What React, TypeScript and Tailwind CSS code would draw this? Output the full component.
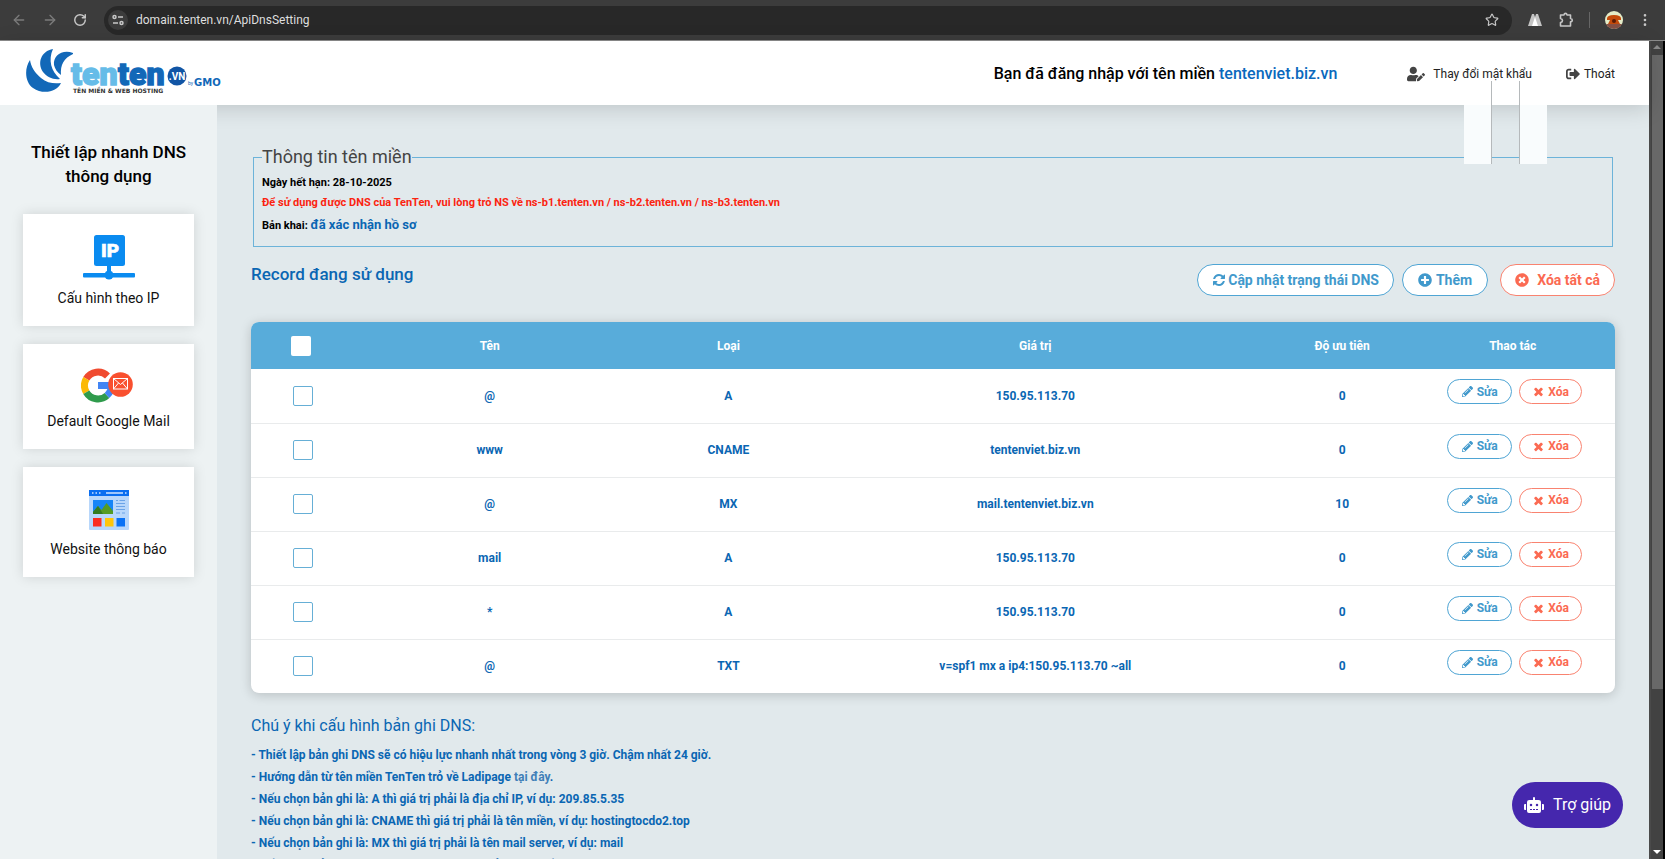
import { type ReactNode } from "react";
import {
  FaPencilAlt,
  FaPlusCircle,
  FaRobot,
  FaSignOutAlt,
  FaTimesCircle,
  FaUserEdit,
} from "react-icons/fa";
import { ArrowLeft, ArrowRight, EllipsisVertical, RotateCw, Star } from "lucide-react";

interface DnsRecord {
  name: string;
  type: string;
  value: string;
  priority: number;
}

const records: DnsRecord[] = [
  { name: "@", type: "A", value: "150.95.113.70", priority: 0 },
  { name: "www", type: "CNAME", value: "tentenviet.biz.vn", priority: 0 },
  { name: "@", type: "MX", value: "mail.tentenviet.biz.vn", priority: 10 },
  { name: "mail", type: "A", value: "150.95.113.70", priority: 0 },
  { name: "*", type: "A", value: "150.95.113.70", priority: 0 },
  { name: "@", type: "TXT", value: "v=spf1 mx a ip4:150.95.113.70 ~all", priority: 0 },
];

function RefreshIcon() {
  return (
    <svg viewBox="0 0 1792 1792" className="size-[14px] fill-current" aria-hidden="true">
      <path d="M1639 1056q0 5-1 7-64 268-268 434.5t-478 166.5q-146 0-282.5-55t-243.5-157l-129 129q-19 19-45 19t-45-19-19-45v-448q0-26 19-45t45-19h448q26 0 45 19t19 45-19 45l-137 137q71 66 161 102t187 36q134 0 250-65t186-179q11-17 53-117 8-23 30-23h192q13 0 22.5 9.5t9.5 22.5zm25-800v448q0 26-19 45t-45 19h-448q-26 0-45-19t-19-45 19-45l138-138q-148-137-349-137-134 0-250 65t-186 179q-11 17-53 117-8 23-30 23h-199q-13 0-22.5-9.5t-9.5-22.5v-7q65-268 270-434.5t480-166.5q146 0 284 55.5t245 156.5l130-129q19-19 45-19t45 19 19 45z" />
    </svg>
  );
}

function CrossIcon() {
  return (
    <svg viewBox="0 0 1792 1792" className="size-[13px] fill-current" aria-hidden="true">
      <path d="M1490 1322q0 40-28 68l-136 136q-28 28-68 28t-68-28l-294-294-294 294q-28 28-68 28t-68-28l-136-136q-28-28-28-68t28-68l294-294-294-294q-28-28-28-68t28-68l136-136q28-28 68-28t68 28l294 294 294-294q28-28 68-28t68 28l136 136q28 28 28 68t-28 68l-294 294 294 294q28 28 28 68z" />
    </svg>
  );
}

function Logo() {
  return (
    <svg viewBox="0 0 200 48" className="mt-[5px] h-12 w-[200px] self-start" role="img" aria-label="tenten.vn">
      <g fill="#1268b8">
        <path d="M5 13C-1 22 0 35 8 41c10 7 24 4 28-5-7 1-14 0-20-5C10 26 6 20 5 13z" />
        <path d="M28 2C16 4 12 16 18 25c4 5 10 8 17 7C26 24 23 13 28 2z" />
        <path d="M48 6C37 2 28 9 29 18c1 4 3 7 7 10-1-10 3-17 12-21z" />
      </g>
      <g fontFamily="Roboto, sans-serif" fontWeight="900" fontSize="32" strokeWidth="1.4">
        <text x="46" y="38" fill="#66bce8" stroke="#66bce8">ten</text>
        <text x="93" y="38" fill="#1268b8" stroke="#1268b8">ten</text>
      </g>
      <circle cx="152" cy="29" r="9.5" fill="#1155a5" />
      <text x="152" y="33" textAnchor="middle" fill="#fff" fontFamily="Roboto, sans-serif" fontWeight="700" fontSize="10">.VN</text>
      <text x="163" y="38" fill="#1268b8" fontFamily="Roboto, sans-serif" fontSize="5">by</text>
      <text x="169" y="39" fill="#1268b8" fontFamily="'DejaVu Sans', sans-serif" fontWeight="700" fontSize="10">GMO</text>
      <text x="48" y="46" fill="#333" fontFamily="'DejaVu Sans', sans-serif" fontWeight="700" fontSize="6">TÊN MIỀN &amp; WEB HOSTING</text>
    </svg>
  );
}

function IpIcon() {
  return (
    <svg viewBox="0 0 52 45" className="h-[45px] w-[52px]" aria-hidden="true">
      <rect x="11" y="0" width="31" height="31" rx="2.5" fill="#0a8bf0" />
      <rect x="24" y="30" width="4" height="9" fill="#0a8bf0" />
      <rect x="0" y="38" width="52" height="4.5" rx="1" fill="#0a8bf0" />
      <circle cx="26" cy="40" r="4.5" fill="#0a8bf0" />
      <text x="27" y="22" textAnchor="middle" fill="#fff" stroke="#fff" strokeWidth="0.6" fontFamily="Roboto, sans-serif" fontWeight="900" fontSize="19">IP</text>
    </svg>
  );
}

function GoogleMailIcon() {
  return (
    <svg viewBox="0 0 56 35" className="mt-[3px] h-[35px] w-14" aria-hidden="true">
      <g fill="none" strokeWidth="7">
        <path d="M5.3 10.8A13.5 13.5 0 0 1 26.5 8" stroke="#f04a2f" />
        <path d="M5.3 10.8a13.5 13.5 0 0 0 0 13.4" stroke="#fbb905" />
        <path d="M5.3 24.2A13.5 13.5 0 0 0 26 27.5" stroke="#2f9b4c" />
        <path d="M26 27.5A13.5 13.5 0 0 0 30.5 17.5H17" stroke="#4285f4" />
      </g>
      <circle cx="39.5" cy="16.5" r="12.3" fill="#f9502f" />
      <rect x="32.5" y="10.5" width="14" height="10.5" fill="none" stroke="#fff" />
      <path d="M32.5 10.5l7 6 7-6M32.5 21l5-6M46.5 21l-5-6" fill="none" stroke="#fff" />
    </svg>
  );
}

function WebsiteIcon() {
  return (
    <svg viewBox="0 0 40 40" className="mt-[2px] mb-px size-10" aria-hidden="true">
      <rect width="40" height="40" rx="1" fill="#b8d7fb" />
      <path d="M0 0h40v6H0z" fill="#0a6ef0" />
      <path d="M3 3h1.5M6.5 3H8M10 3h1.5M17 3h17M36 3h1.5" stroke="#cfe4ff" strokeWidth="1.5" />
      <rect x="4" y="10" width="20" height="14" fill="#1685f7" />
      <path d="M4 24v-2l5-6 3.5 4L17.5 13 24 21v3z" fill="#559b24" />
      <path d="M4 24v-2l5-6 5 8z" fill="#347b20" />
      <path d="M27 10.5h2M30.5 10.5H36M27 13.5h9M27 16.5h9M27 19.5h9M27 23h4M33 23h3" stroke="#6ba4e8" />
      <rect x="4" y="28" width="8.5" height="8.5" fill="#fb2c20" />
      <rect x="16" y="28" width="8.5" height="8.5" fill="#ffc60a" />
      <rect x="27.5" y="28" width="8.5" height="8.5" fill="#0a72f5" />
    </svg>
  );
}

function BrowserBar() {
  return (
    <div className="flex h-[41px] items-center border-b border-[#8c8c8c] bg-[#3c3c3c] pr-3 pl-[11px] text-[#c7c7c7]">
      <div className="flex w-[93px] shrink-0 items-center gap-[15px]">
        <button type="button" aria-label="Back" className="text-[#7b7b7b]">
          <ArrowLeft size={16} />
        </button>
        <button type="button" aria-label="Forward" className="text-[#7b7b7b]">
          <ArrowRight size={16} />
        </button>
        <button type="button" aria-label="Reload">
          <RotateCw size={14} strokeWidth={2.5} />
        </button>
      </div>
      <div className="flex h-[29px] flex-1 items-center rounded-full bg-[#282828] pr-[13px] pl-1">
        <button
          type="button"
          aria-label="Site information"
          className="flex size-5 items-center justify-center rounded-full bg-[#3c3c3c]"
        >
          <svg viewBox="0 0 12 12" className="size-3" fill="none" stroke="currentColor" strokeWidth="1.5">
            <circle cx="2.5" cy="3" r="1.5" />
            <path d="M6 3h5M1 9h5" />
            <circle cx="9.5" cy="9" r="1.5" />
          </svg>
        </button>
        <input
          aria-label="Address"
          defaultValue="domain.tenten.vn/ApiDnsSetting"
          className="ml-2 flex-1 bg-transparent font-[Roboto,sans-serif] text-[12px] text-[#dedede] outline-none"
        />
        <button type="button" aria-label="Bookmark">
          <Star size={14} strokeWidth={2} />
        </button>
      </div>
      <div className="ml-4 flex items-center">
        <svg viewBox="0 0 14 12" className="h-3 w-[14px]" aria-hidden="true">
          <path d="M0 12L4 0h2l1 3 1-3h2l4 12z" fill="#c4c4c4" />
          <path d="M7 3l-3 9h6z" fill="#fff" />
        </svg>
        <svg
          viewBox="0 0 16 16"
          className="ml-4 size-4"
          fill="none"
          stroke="currentColor"
          strokeWidth="1.6"
          strokeLinejoin="round"
          aria-hidden="true"
        >
          <path d="M2.5 3H6q.2-1.600 1.500-1.600T9 3h3.500v3.500q1.800.2 1.800 1.700t-1.800 1.700V14h-10v-3.500q2-.3 2-2t-2-2z" />
        </svg>
        <span className="mx-[15px] h-4 w-px bg-[#666]" />
        <svg viewBox="0 0 18 18" className="size-[18px]" aria-hidden="true">
          <circle cx="9" cy="9" r="9" fill="#e4ecc8" />
          <path d="M1 13a9 9 0 0 0 16 0z" fill="#855044" />
          <path d="M2 7.500Q2 4 9 4t7 3.500V9h-3l2 4H3l2-4H2z" fill="#c44a0a" />
          <circle cx="9" cy="10" r="2" fill="#5a1c05" />
        </svg>
        <button type="button" aria-label="Menu" className="ml-[14px]">
          <EllipsisVertical size={16} />
        </button>
      </div>
    </div>
  );
}

function Header() {
  return (
    <header className="relative z-10 flex h-16 items-center bg-white pt-px pr-[34px] pl-[25px] text-[12px] text-[#222] shadow-[0_4px_20px_rgba(0,0,0,0.15)]">
      <Logo />
      <p className="ml-auto text-[16px] font-medium text-black">
        Bạn đã đăng nhập với tên miền <span className="text-[#0a69bd]">tentenviet.biz.vn</span>
      </p>
      <a href="#password" className="relative ml-[70px] flex items-center gap-2">
        <FaUserEdit size={18} className="text-[#444]" />
        Thay đổi mật khẩu
        {/* collapsed dropdown panels hanging under the link */}
        <span className="absolute top-10 left-[57px] h-[59px] w-[27px] bg-[#f9fcfd]" />
        <span className="absolute top-4 left-[84px] h-[83px] w-px bg-[#b5b9bb]" />
        <span className="absolute top-4 left-[112px] h-[83px] w-px bg-[#b5b9bb]" />
        <span className="absolute top-10 left-[113px] h-[59px] w-[27px] bg-[#f9fcfd]" />
      </a>
      <a href="#logout" className="ml-[34px] flex items-center gap-1">
        <FaSignOutAlt size={14} className="text-[#444]" />
        Thoát
      </a>
    </header>
  );
}

function QuickCard({ icon, label }: { icon: ReactNode; label: string }) {
  return (
    <button
      type="button"
      className="flex w-full flex-col items-center gap-2 bg-white pt-[21px] pb-[18px] text-[14px] leading-5 text-[#111] shadow-[0_0_12px_rgba(0,0,0,0.13)]"
    >
      {icon}
      {label}
    </button>
  );
}

function DnsTable() {
  return (
    <div className="mt-[26px] overflow-hidden rounded-lg bg-white shadow-[0_2px_12px_rgba(0,0,0,0.18)]">
      <table className="w-full table-fixed text-center text-[12px] font-bold text-[#0a66b3]">
        <thead>
          <tr className="h-[47px] bg-[#58acda] text-white">
            <th className="w-[5%] pl-10">
              <input
                type="checkbox"
                aria-label="Chọn tất cả"
                className="block size-5 appearance-none rounded-xs bg-white"
              />
            </th>
            <th className="w-[25%]">Tên</th>
            <th className="w-[10%]">Loại</th>
            <th className="w-[35%]">Giá trị</th>
            <th className="w-[10%]">Độ ưu tiên</th>
            <th className="w-[15%]">Thao tác</th>
          </tr>
        </thead>
        <tbody>
          {records.map((r, i) => (
            <tr key={i} className="h-[54px] border-b border-[#e9ebec] last:border-0">
              <td className="pl-[42px]">
                <input
                  type="checkbox"
                  aria-label={`Chọn ${r.name} ${r.type}`}
                  className="block size-5 appearance-none rounded-xs border border-[#66afd6] bg-white"
                />
              </td>
              <td>{r.name}</td>
              <td>{r.type}</td>
              <td>{r.value}</td>
              <td>{r.priority}</td>
              <td className="pt-[10px] align-top">
                <div className="flex justify-center gap-[7px] pl-1">
                  <button
                    type="button"
                    className="flex h-[25px] w-[65px] items-center justify-center gap-1 rounded-full border border-[#4fa5d4] text-[#4199cc]"
                  >
                    <FaPencilAlt size={11} />
                    Sửa
                  </button>
                  <button
                    type="button"
                    className="flex h-[25px] w-[63px] items-center justify-center gap-[3px] rounded-full border border-[#f98370] text-[#fb6a52]"
                  >
                    <CrossIcon />
                    Xóa
                  </button>
                </div>
              </td>
            </tr>
          ))}
        </tbody>
      </table>
    </div>
  );
}

function Notes() {
  return (
    <section className="mt-[23px] text-[#0a66b3]">
      <h3 className="text-[16px] leading-5">Chú ý khi cấu hình bản ghi DNS:</h3>
      <div className="mt-2 text-[12px] leading-[22px] font-bold">
        <p>- Thiết lập bản ghi DNS sẽ có hiệu lực nhanh nhất trong vòng 3 giờ. Chậm nhất 24 giờ.</p>
        <p>
          - Hướng dẫn từ tên miền TenTen trỏ về Ladipage{" "}
          <a href="#ladipage" className="text-[#3f7fb8]">
            tại đây
          </a>
          .
        </p>
        <p>- Nếu chọn bản ghi là: A thì giá trị phải là địa chỉ IP, ví dụ: 209.85.5.35</p>
        <p>- Nếu chọn bản ghi là: CNAME thì giá trị phải là tên miền, ví dụ: hostingtocdo2.top</p>
        <p>- Nếu chọn bản ghi là: MX thì giá trị phải là tên mail server, ví dụ: mail</p>
        <p>- Nếu chọn bản ghi là: REDIRECT thì giá trị phải là tên miền, ví dụ: hostingtocdo2.top</p>
      </div>
    </section>
  );
}

export default function App() {
  return (
    <div className="flex h-screen flex-col overflow-hidden font-[Roboto,'Liberation_Sans',sans-serif]">
      <BrowserBar />
      <div className="flex min-h-0 flex-1">
        <div className="flex min-w-0 flex-1 flex-col">
          <Header />
          <div className="flex min-h-0 flex-1 overflow-hidden">
            <aside className="relative z-20 w-[217px] shrink-0 bg-[#edf2f3] px-[23px] pt-[35px]">
              <h2 className="text-center text-[17px] leading-6 font-medium text-black">
                Thiết lập nhanh DNS thông dụng
              </h2>
              <div className="mt-[26px] flex flex-col gap-[18px]">
                <QuickCard icon={<IpIcon />} label="Cấu hình theo IP" />
                <QuickCard icon={<GoogleMailIcon />} label="Default Google Mail" />
                <QuickCard icon={<WebsiteIcon />} label="Website thông báo" />
              </div>
            </aside>
            <main className="min-w-0 flex-1 bg-[#e1e9ec] px-[34px] pt-10">
              <fieldset className="mx-[2px] border border-[#6cb3d9] px-2 pb-2 text-[11px] font-bold text-black">
                <legend className="text-[18px] leading-6 font-normal text-[#444]">
                  Thông tin tên miền
                </legend>
                <p className="mt-1 leading-5">Ngày hết hạn: 28-10-2025</p>
                <p className="leading-5 text-[#fb2410]">
                  Để sử dụng được DNS của TenTen, vui lòng trỏ NS về ns-b1.tenten.vn / ns-b2.tenten.vn / ns-b3.tenten.vn
                </p>
                <p className="leading-6">
                  Bản khai: <span className="text-[13px] text-[#0a66b3]">đã xác nhận hồ sơ</span>
                </p>
              </fieldset>
              <div className="mt-[17px] flex items-start">
                <h2 className="text-[17px] leading-5 font-medium text-[#0a66b3]">
                  Record đang sử dụng
                </h2>
                <div className="ml-auto flex text-[14px] font-bold text-[#4199cc]">
                  <button
                    type="button"
                    className="flex h-8 items-center gap-[2px] rounded-full border border-[#4fa5d4] bg-white px-[14px]"
                  >
                    <RefreshIcon />
                    Cập nhật trạng thái DNS
                  </button>
                  <button
                    type="button"
                    className="ml-2 flex h-8 items-center gap-1 rounded-full border border-[#4fa5d4] bg-white px-[15px]"
                  >
                    <FaPlusCircle size={14} />
                    Thêm
                  </button>
                  <button
                    type="button"
                    className="ml-3 flex h-8 items-center gap-2 rounded-full border border-[#f98370] bg-white px-[14px] text-[#fb6a52]"
                  >
                    <FaTimesCircle size={14} />
                    Xóa tất cả
                  </button>
                </div>
              </div>
              <DnsTable />
              <Notes />
            </main>
          </div>
        </div>
        <div className="flex w-4 shrink-0 flex-col items-center border-x-2 border-r-black border-l-[#4a4a4a] bg-[#424242]">
          <span className="mt-1 border-x-[4px] border-b-[4px] border-x-transparent border-b-[#8c8c8c]" />
          <span className="mt-[6px] h-[634px] w-[11px] bg-[#686868]" />
          <span className="mt-auto mb-[5px] border-x-[4px] border-t-[4px] border-x-transparent border-t-white" />
        </div>
      </div>
      <button
        type="button"
        className="fixed right-[42px] bottom-[31px] z-30 flex h-[46px] items-center gap-[9px] rounded-full bg-[#4527ad] px-3 text-[16px] text-white"
      >
        <FaRobot size={20} />
        Trợ giúp
      </button>
    </div>
  );
}
